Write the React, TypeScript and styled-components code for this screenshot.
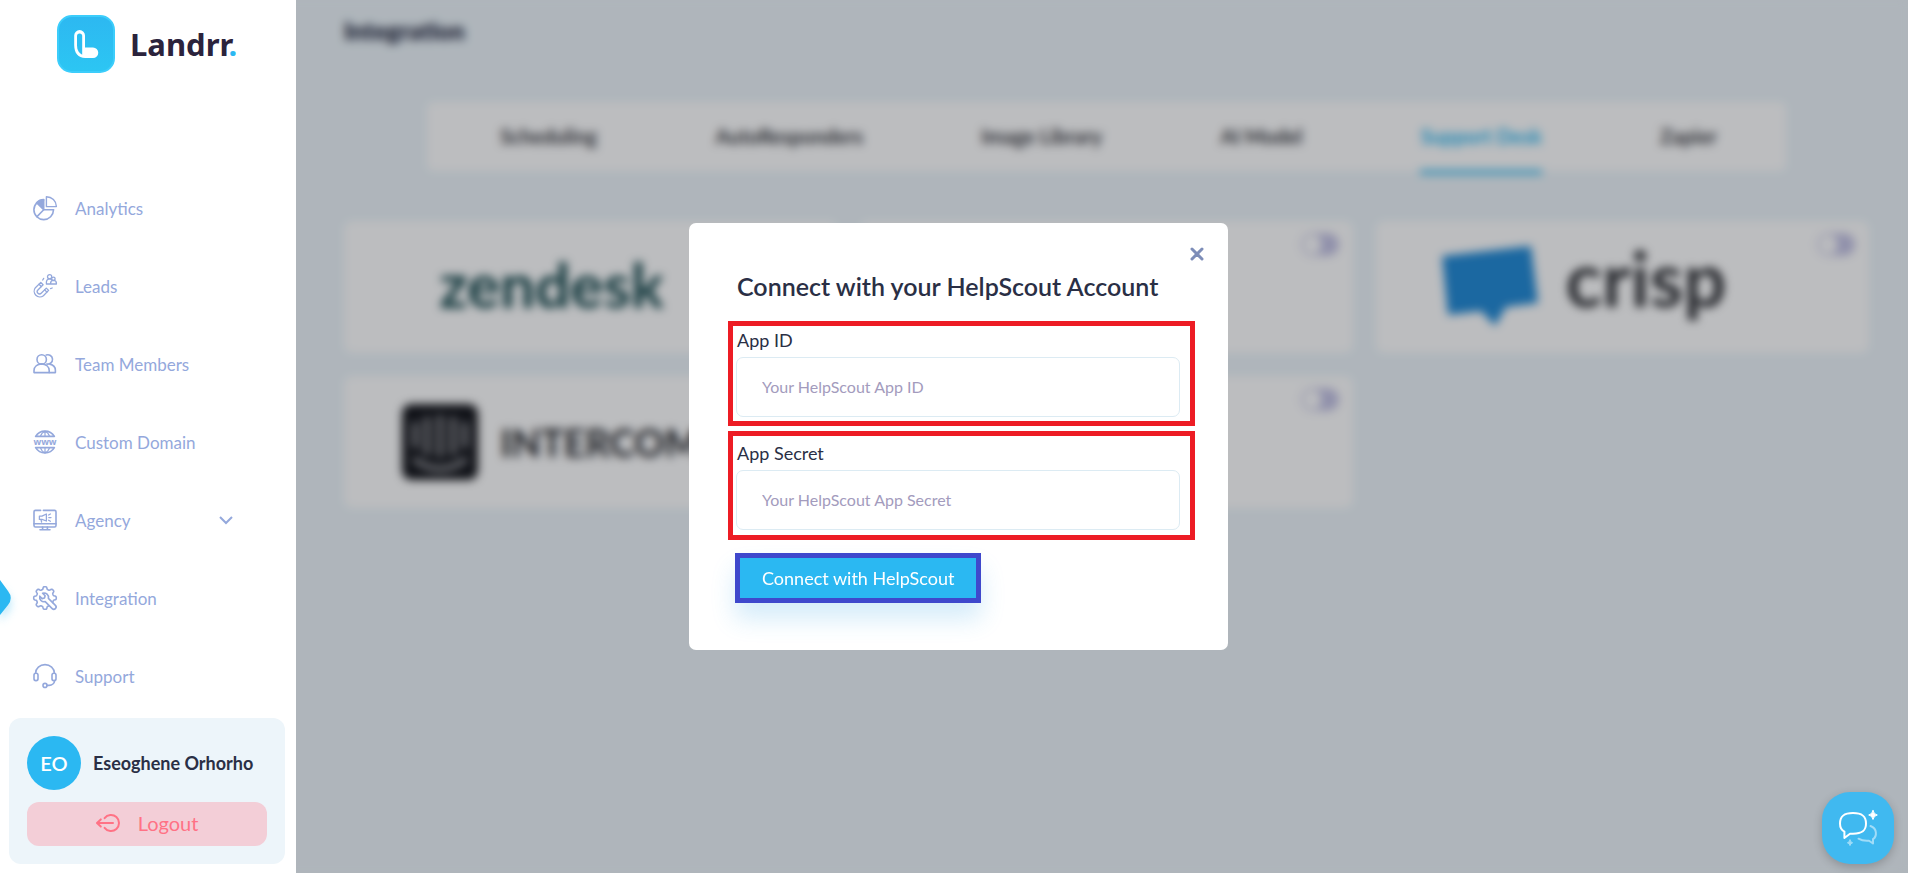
import React from 'react';
import styled, { createGlobalStyle, css } from 'styled-components';

const GlobalStyle = createGlobalStyle`
  *, *::before, *::after { box-sizing: border-box; }
  body {
    margin: 0;
    background: #edf5fa;
    color: #2a2f45;
    font-family: Lato, 'Liberation Sans', sans-serif;
  }
  button, input { font: inherit; }
  button { cursor: pointer; }
`;

/* ---------- page shell ---------- */

const Shell = styled.div`
  display: flex;
  min-height: 100vh;
`;

const Sidebar = styled.aside`
  position: sticky;
  top: 0;
  z-index: 2;
  display: flex;
  flex: none;
  flex-direction: column;
  width: 296px;
  height: 100vh;
  background: #fff;
`;

const Main = styled.main`
  flex: 1;
  min-width: 0;
  padding: 16px 39px 48px 48px;
`;

/* ---------- sidebar ---------- */

const Brand = styled.a`
  display: flex;
  align-items: center;
  gap: 15px;
  padding: 15px 0 0 57px;
  color: #2b233c;
  font-family: 'Noto Sans', sans-serif;
  font-size: 31px;
  font-weight: 700;
  line-height: 58px;
  text-decoration: none;
`;

const BrandDot = styled.span`
  color: #2bb8f2;
`;

const Nav = styled.nav`
  display: flex;
  flex-direction: column;
  margin-top: 96px;
`;

const NavLink = styled.a`
  position: relative;
  display: flex;
  align-items: center;
  gap: 18px;
  height: 78px;
  padding: 0 63px 0 33px;
  color: #94a8dc;
  font-size: 17px;
  text-decoration: none;
`;

const NavText = styled.span`
  flex: 1;
`;

const ActiveMark = styled.svg`
  position: absolute;
  left: 0;
  top: 21px;
  overflow: visible;
  filter: drop-shadow(0 6px 5px rgba(43, 184, 242, 0.35));
`;

const Profile = styled.section`
  display: flex;
  flex-direction: column;
  gap: 12px;
  margin: auto 11px 9px 9px;
  padding: 18px;
  border-radius: 12px;
  background: #edf5fa;
`;

const Person = styled.div`
  display: flex;
  align-items: center;
  gap: 12px;
  font-size: 18px;
  font-weight: 700;
  white-space: nowrap;
`;

const Avatar = styled.span`
  display: grid;
  place-items: center;
  width: 54px;
  height: 54px;
  border-radius: 50%;
  background: #2bb8f2;
  color: #fff;
  font-size: 20px;
  font-weight: 600;
`;

const LogoutButton = styled.button`
  display: flex;
  align-items: center;
  justify-content: center;
  gap: 18px;
  height: 44px;
  width: 240px;
  padding: 0 0 2px;
  border: 0;
  border-radius: 12px;
  background: #f3ced7;
  color: #ff7285;
  font-size: 20px;
`;

/* ---------- integrations page ---------- */

const PageTitle = styled.h1`
  margin: 0;
  font-size: 24px;
  font-weight: 800;
  line-height: 30px;
`;

const TabBar = styled.div`
  display: flex;
  justify-content: space-around;
  height: 69px;
  margin: 56px 83px 50px;
  padding: 0 10px 0 14px;
  border-radius: 6px;
  background: #fff;
`;

const Tab = styled.button<{ $active?: boolean }>`
  height: 72px;
  padding: 0;
  border: 0;
  border-bottom: 4px solid ${(p) => (p.$active ? '#2bb8f2' : 'transparent')};
  background: none;
  color: ${(p) => (p.$active ? '#2bb8f2' : '#3a3b42')};
  font-size: 20px;
  font-weight: 700;
`;

const CardGrid = styled.div`
  display: grid;
  grid-template-columns: repeat(3, 1fr);
  gap: 23px;
`;

const Card = styled.article`
  display: flex;
  height: 132px;
  padding: 12px 14px 12px 0;
  border-radius: 8px;
  background: #fff;
`;

const CardLogo = styled.div`
  display: flex;
  flex: 1;
  align-items: center;
  justify-content: center;
  padding-right: 26px;
`;

const Toggle = styled.input`
  appearance: none;
  flex: none;
  width: 38px;
  height: 23px;
  margin: 0;
  border: 2px solid #cac9e6;
  border-radius: 12px;
  background: radial-gradient(circle at 9px 50%, #fff 9px, #c3c2e4 10px);
`;

const wordmarks = {
  zendesk: css`
    padding-bottom: 6px;
    color: #17494d;
    font-size: 62px;
    font-weight: 700;
    line-height: 80px;
  `,
  intercom: css`
    margin-left: 22px;
    color: #25262a;
    font-size: 38px;
    font-weight: 700;
  `,
  crisp: css`
    margin-left: 28px;
    padding-bottom: 18px;
    color: #37383c;
    font-size: 76px;
    font-weight: 700;
    line-height: 80px;
  `,
};

const Wordmark = styled.span<{ $brand: keyof typeof wordmarks }>`
  ${(p) => wordmarks[p.$brand]}
`;

/* ---------- dialog ---------- */

const Overlay = styled.div`
  position: fixed;
  inset: 0;
  z-index: 1;
  display: grid;
  place-items: center;
  padding-left: 9px;
  background: rgba(2, 6, 14, 0.265);
  backdrop-filter: blur(5px);
`;

const Dialog = styled.form`
  position: relative;
  display: flex;
  flex-direction: column;
  align-items: stretch;
  width: 539px;
  padding: 45px 33px 47px 39px;
  border-radius: 7px;
  background: #fff;
`;

const DialogTitle = styled.h2`
  margin: 0 0 17px;
  padding-left: 9px;
  font-size: 25px;
  font-weight: 600;
  line-height: 36px;
`;

const CloseButton = styled.button`
  position: absolute;
  top: 20px;
  right: 20px;
  display: grid;
  place-items: center;
  width: 22px;
  height: 22px;
  padding: 0;
  border: 0;
  background: none;
  color: #7d8db8;
`;

const Fields = styled.div`
  display: flex;
  flex-direction: column;
  gap: 5px;
`;

const Field = styled.div<{ $spaced?: boolean }>`
  padding: ${(p) => (p.$spaced ? '3px 10px 5px 3px' : '0 10px 4px 3px')};
  border: 5px solid #ed1c24;
`;

const Label = styled.label`
  display: block;
  padding: 0 0 2px 1px;
  font-size: 18px;
  line-height: 29px;
`;

const TextInput = styled.input`
  display: block;
  width: 100%;
  height: 60px;
  padding: 0 25px 2px;
  border: 1px solid #dcebf3;
  border-radius: 7px;
  outline: 0;
  background: #fff;
  color: #2a2f45;
  font-size: 16px;
  &::placeholder { color: #a39bbd; opacity: 1; }
`;

const SubmitButton = styled.button`
  align-self: flex-start;
  height: 50px;
  margin: 13px 0 0 7px;
  padding: 0 22px;
  border: 5px solid #3f48cc;
  background: #2bb8f2;
  box-shadow: 0 16px 24px rgba(43, 160, 230, 0.2);
  color: #fff;
  font-size: 18px;
`;

const ChatButton = styled.button`
  position: fixed;
  right: 14px;
  bottom: 9px;
  z-index: 3;
  display: grid;
  place-items: center;
  width: 72px;
  height: 72px;
  padding: 0;
  border: 0;
  border-radius: 28px;
  background: #40b9f0;
  box-shadow: 0 3px 10px rgba(0, 0, 0, 0.2);
`;

/* ---------- drawings ---------- */

const LineIcon = styled.svg.attrs({ viewBox: '0 0 24 24', width: 24, height: 24, 'aria-hidden': true })`
  flex: none;
  overflow: visible;
  fill: none;
  stroke: currentColor;
  stroke-width: 1.6px;
  stroke-linecap: round;
  stroke-linejoin: round;
`;

const AnalyticsIcon = () => (
  <LineIcon>
    <path d="M13.4 .7V10.6H23.4A10 10 0 0 0 13.4 .7z" strokeWidth="1.4" />
    <path d="M20.5 13.8A9.8 9.8 0 1 1 10.7 4" />
    <path d="M10.7 13.8H20.5M10.7 13.8L4 20.6" />
    <path d="M10.7 13.8V3.6A10 10 0 0 0 3.6 6.7z" fill="currentColor" />
  </LineIcon>
);

const LeadsIcon = () => (
  <LineIcon>
    <g strokeWidth="1.3">
      <path d="M7.8 8.4L2.4 13.7a5.7 5.7 0 0 0 8 8L15.6 16.4 13.3 14.1 8.2 19.3a2.3 2.3 0 0 1-3.3-3.3L10.1 10.7z" />
      <path d="M6 10.2l2.3 2.3M11.6 15.8l2.3 2.3M9.7 6l1-1.6M17.6 14.6l1.6-.6" />
      <circle cx="16.6" cy="2.8" r="2.1" />
      <circle cx="20.4" cy="4.8" r="1.7" />
      <path d="M13.4 10V7.9a3.2 3.2 0 0 1 5.3-2.2M13.4 10H23.4V9.2a2.9 2.9 0 0 0-5.8 0V10" />
    </g>
  </LineIcon>
);

const TeamIcon = () => (
  <LineIcon>
    <circle cx="8.7" cy="7.4" r="4.7" />
    <path d="M1 20.6v-2.2a7.4 6.4 0 0 1 15.2 0v2.2z" />
    <path d="M13.2 3a4.7 4.7 0 1 1 .6 9M16.2 20.6h6.2v-2.2a7.2 6.4 0 0 0-5.6-6.3" />
  </LineIcon>
);

const WwwText = styled.text`
  fill: currentColor;
  stroke: none;
  font-family: 'Open Sans', sans-serif;
  font-size: 9px;
  font-weight: 700;
`;

const DomainIcon = () => (
  <LineIcon>
    <path d="M2.6 6.4A11 11 0 0 1 21.4 6.4zM2.6 17.6A11 11 0 0 0 21.4 17.6z" />
    <path d="M7.4 6.4Q8.8 2.4 12 1.2 15.2 2.4 16.6 6.4M7.4 17.6Q8.8 21.6 12 22.8 15.2 21.6 16.6 17.6M12 1v5.4M12 17.6V23" strokeWidth="1.2" />
    <WwwText x="12" y="14.6" textAnchor="middle">www</WwwText>
  </LineIcon>
);

const AgencyIcon = () => (
  <LineIcon>
    <path d="M7.6 2.4H2.4a1.4 1.4 0 0 0-1.4 1.4V17.6A1.4 1.4 0 0 0 2.4 19H21.6a1.4 1.4 0 0 0 1.4-1.4V3.8a1.4 1.4 0 0 0-1.4-1.4H10.4" />
    <path d="M1 15.8H23M9.6 19v2.6M14.4 19v2.6M7 21.8H17" />
    <path d="M6.4 8.2H9L13.4 6V13L9 11.4H6.4zM8 11.6l.6 2.4" strokeWidth="1.3" />
    <path d="M15.6 7l1.8-1M15.8 9.6H18M15.6 12.2l1.8 1" strokeWidth="1.3" />
  </LineIcon>
);

const gearPath = Array.from({ length: 111 }, (_, i) => {
  const angle = ((66 + i * 2.95) * Math.PI) / 180;
  const radius = 10 + 1.3 * Math.tanh(2.4 * Math.cos(8 * angle));
  return `${i ? 'L' : 'M'}${(12 + radius * Math.cos(angle)).toFixed(2)} ${(12 + radius * Math.sin(angle)).toFixed(2)}`;
}).join('');

const IntegrationIcon = () => (
  <LineIcon>
    <path d={gearPath} />
    <path d="M9.6 7.2l2.5 2.6-.6 2.2-2.4.6L6.8 10.2c-.8 3.4 2 6.2 5.4 5.4l7 7a2 2 0 0 0 3.2-3.2l-7-7c.8-3.4-2.4-6-5.8-5.2z" />
  </LineIcon>
);

const SupportIcon = () => (
  <LineIcon>
    <rect x="1" y="9.2" width="4" height="7.4" rx="1.8" />
    <rect x="19" y="9.2" width="4" height="7.4" rx="1.8" />
    <path d="M2.6 9.2A9.4 8.6 0 0 1 21.4 9.2M21.6 16.6A6 5 0 0 1 16 21.4H14" />
    <circle cx="12" cy="21.4" r="2" />
  </LineIcon>
);

const LogoutIcon = () => (
  <LineIcon>
    <path d="M8.6 7.2A8 8 0 1 1 8.6 16.8" strokeWidth="2" />
    <path d="M17 12H1.2M4.8 8.4L1 12l3.8 3.6" strokeWidth="2" />
  </LineIcon>
);

const ChevronIcon = () => (
  <svg width="14" height="9" viewBox="0 0 14 9" fill="none" stroke="currentColor" strokeWidth="2" aria-hidden="true">
    <path d="M1 1l6 6 6-6" />
  </svg>
);

const BrandMark = () => (
  <svg width="58" height="58" viewBox="0 0 58 58" aria-hidden="true">
    <defs>
      <linearGradient id="brandFill" x1="0" y1="0" x2="0" y2="1">
        <stop offset="0" stopColor="#2db8f1" />
        <stop offset="1" stopColor="#2cc6f3" />
      </linearGradient>
    </defs>
    <rect x="1" y="1" width="56" height="56" rx="14" fill="url(#brandFill)" stroke="#3ccdfb" strokeWidth="2" />
    <path d="M28 32.500V20.500a5.400 5.400 0 0 0-10.800 0V30c0 8 4 13 11 13H36a5.200 5.200 0 0 0 0-10.500z" fill="#fff" />
    <path d="M25.200 39.800V21a2.600 2.600 0 0 0-5.200 0v9.500c0 4.500 2 7.700 5.200 9.300z" fill="#2cbef2" />
  </svg>
);

const IntercomMark = () => (
  <svg width="76" height="76" viewBox="0 0 76 76" aria-hidden="true">
    <rect width="76" height="76" rx="9" fill="#16171c" />
    <path d="M13 20v22M25 15v34M38 13v38M51 15v34M63 20v22M13 56q25 18 50 0" fill="none" stroke="#a5a6aa" strokeWidth="5" strokeLinecap="round" />
  </svg>
);

const CrispMark = () => (
  <svg width="97" height="82" viewBox="0 0 97 82" aria-hidden="true">
    <path d="M1 10L90 0 97 57 65 61 54 80 40 65 7 69z" fill="#248bd6" />
  </svg>
);

const ChatIcon = () => (
  <svg width="72" height="72" viewBox="0 0 72 72" fill="none" stroke="#fff" strokeWidth="2" strokeLinejoin="round" strokeLinecap="round" aria-hidden="true">
    <path d="M31 21c-9 0-13 3-13 10.500 0 4 1.400 6.600 4.400 8.100V46l5.600-4.300h3c9 0 13-2.700 13-10.200S40 21 31 21z" />
    <path d="M48.500 34c7 2.500 6.500 10.500 2.500 13.200v4.300l-4-2.800c-4 .3-7.500-.2-10.500-2" opacity=".5" />
    <path d="M51 18.500q.8 4 4.300 4.500-3.500.6-4.300 4.500-.8-4-4.300-4.500 3.500-.6 4.300-4.500z" fill="#fff" strokeWidth="1" />
    <path d="M28 48q.5 2.400 2.600 2.800-2.100.4-2.600 2.800-.5-2.400-2.600-2.800 2.100-.4 2.600-2.800z" fill="#fff" strokeWidth="1" opacity=".5" />
  </svg>
);

/* ---------- content ---------- */

const navItems = [
  { text: 'Analytics', Icon: AnalyticsIcon },
  { text: 'Leads', Icon: LeadsIcon },
  { text: 'Team Members', Icon: TeamIcon },
  { text: 'Custom Domain', Icon: DomainIcon },
  { text: 'Agency', Icon: AgencyIcon, expandable: true },
  { text: 'Integration', Icon: IntegrationIcon, active: true },
  { text: 'Support', Icon: SupportIcon },
];

const tabs = ['Scheduling', 'AutoResponders', 'Image Library', 'AI Model', 'Support Desk', 'Zapier'];

const cards: { id: string; logo?: React.ReactNode }[] = [
  { id: 'zendesk', logo: <Wordmark $brand="zendesk">zendesk</Wordmark> },
  { id: 'helpscout' },
  { id: 'crisp', logo: <><CrispMark /><Wordmark $brand="crisp">crisp</Wordmark></> },
  { id: 'intercom', logo: <><IntercomMark /><Wordmark $brand="intercom">INTERCOM</Wordmark></> },
  { id: 'other' },
];

export default function App() {
  return (
    <>
      <GlobalStyle />
      <Shell>
        <Sidebar>
          <Brand href="#">
            <BrandMark />
            <span>Landrr<BrandDot>.</BrandDot></span>
          </Brand>
          <Nav>
            {navItems.map(({ text, Icon, expandable, active }) => (
              <NavLink key={text} href="#" aria-current={active ? 'page' : undefined}>
                {active && (
                  <ActiveMark width="12" height="36" viewBox="0 0 12 36" aria-hidden="true">
                    <path d="M0 0L8 11Q13.500 18 8 25L0 35z" fill="#2bb8f2" />
                  </ActiveMark>
                )}
                <Icon />
                <NavText>{text}</NavText>
                {expandable && <ChevronIcon />}
              </NavLink>
            ))}
          </Nav>
          <Profile>
            <Person>
              <Avatar>EO</Avatar>
              Eseoghene Orhorho
            </Person>
            <LogoutButton type="button">
              <LogoutIcon />
              Logout
            </LogoutButton>
          </Profile>
        </Sidebar>

        <Main>
          <PageTitle>Integration</PageTitle>
          <TabBar role="tablist">
            {tabs.map((tab) => (
              <Tab key={tab} type="button" role="tab" $active={tab === 'Support Desk'}>{tab}</Tab>
            ))}
          </TabBar>
          <CardGrid>
            {cards.map(({ id, logo }) => (
              <Card key={id}>
                <CardLogo>{logo}</CardLogo>
                <Toggle type="checkbox" role="switch" aria-label={id} />
              </Card>
            ))}
          </CardGrid>
        </Main>
      </Shell>

      <Overlay>
        <Dialog role="dialog" aria-modal="true" aria-labelledby="dialog-title" onSubmit={(e) => e.preventDefault()}>
          <CloseButton type="button" aria-label="Close">
            <svg width="14" height="14" viewBox="0 0 14 14" stroke="currentColor" strokeWidth="3" strokeLinecap="round" aria-hidden="true">
              <path d="M2 2l10 10M12 2L2 12" />
            </svg>
          </CloseButton>
          <DialogTitle id="dialog-title">Connect with your HelpScout Account</DialogTitle>
          <Fields>
            <Field>
              <Label htmlFor="app-id">App ID</Label>
              <TextInput id="app-id" type="text" placeholder="Your HelpScout App ID" />
            </Field>
            <Field $spaced>
              <Label htmlFor="app-secret">App Secret</Label>
              <TextInput id="app-secret" type="text" placeholder="Your HelpScout App Secret" />
            </Field>
          </Fields>
          <SubmitButton type="submit">Connect with HelpScout</SubmitButton>
        </Dialog>
      </Overlay>

      <ChatButton type="button" aria-label="Open chat">
        <ChatIcon />
      </ChatButton>
    </>
  );
}
